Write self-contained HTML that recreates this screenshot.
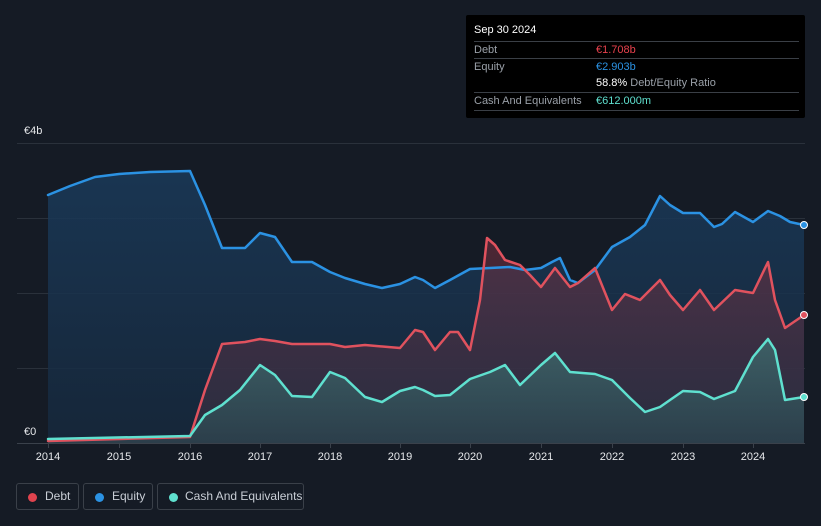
<!DOCTYPE html>
<html><head><meta charset="utf-8"><style>
html,body{margin:0;background:#151b25;width:821px;height:526px;overflow:hidden;font-family:"Liberation Sans",sans-serif;position:relative}
.tt{position:absolute;left:466px;top:15px;width:339px;height:103px;background:#000;border-radius:2px}
.tt .r{position:absolute;left:8px;right:6px;font-size:11px;color:#9aa0a8;border-top:1px solid #3a3f46;height:17px;line-height:16px;white-space:nowrap}
.tt .v{position:absolute;left:122px}
.leg{position:absolute;top:483px;height:27px;border:1px solid #3a4049;border-radius:3px;color:#c9ced6;font-size:12px;line-height:25px;box-sizing:border-box;white-space:nowrap}
.leg i{position:absolute;left:11px;top:9px;width:9px;height:9px;border-radius:50%}
.ax{position:absolute;top:451px;font-size:11px;color:#e6e8eb;width:40px;text-align:center}
</style></head><body>
<svg width="821" height="526" style="position:absolute;left:0;top:0">
<defs>
<linearGradient id="ge" x1="0" y1="0" x2="0" y2="1"><stop offset="0" stop-color="#1a3a5a" stop-opacity=".85"/><stop offset="1" stop-color="#16283c" stop-opacity=".85"/></linearGradient>
<linearGradient id="gd" x1="0" y1="0" x2="0" y2="1"><stop offset="0" stop-color="#7a3040" stop-opacity=".55"/><stop offset="1" stop-color="#3a3346" stop-opacity=".5"/></linearGradient>
<linearGradient id="gc" x1="0" y1="0" x2="0" y2="1"><stop offset="0" stop-color="#3f7f7c" stop-opacity=".6"/><stop offset="1" stop-color="#2e4a52" stop-opacity=".6"/></linearGradient>
</defs>
<g stroke="#2a313b" stroke-width="1">
<line x1="17" y1="143.5" x2="805" y2="143.5"/><line x1="17" y1="218.5" x2="805" y2="218.5"/><line x1="17" y1="293.5" x2="805" y2="293.5"/><line x1="17" y1="368.5" x2="805" y2="368.5"/>
</g>
<polygon fill="url(#ge)" points="48,443 48,195 70,186 95,177 119,174 150,172 190,171 205,205 222,248 245,248 260,233 275,237 292,262 312,262 330,272 345,278 365,284 382,288 400,284 415,277 423,280 435,288 450,280 470,269 490,268 510,267 525,270 541,268 552,262 560,258 570,280 578,283 595,270 612,247 630,237 645,225 660,196 670,205 683,213 700,213 714,227 722,224 735,212 753,222 768,211 780,216 790,222 804,225 804,443"/>
<polygon fill="url(#gd)" points="48,443 48,441 190,437 205,390 222,344 245,342 260,339 275,341 292,344 330,344 345,347 365,345 400,348 415,330 423,332 435,350 450,332 458,332 470,350 480,300 487,238 495,245 505,260 520,265 530,275 541,287 555,268 570,287 578,283 595,268 612,310 625,294 640,300 660,280 670,295 683,310 700,290 714,310 735,290 753,293 768,262 775,300 785,328 804,315 804,443"/>
<polygon fill="url(#gc)" points="48,443 48,439 190,436 205,415 222,405 240,390 260,365 275,375 292,396 312,397 330,372 345,378 365,397 382,402 400,391 415,387 423,390 435,396 450,395 470,379 490,372 505,365 520,385 541,365 555,353 570,372 595,374 612,380 630,398 645,412 660,407 670,400 683,391 700,392 714,399 735,391 753,357 768,339 775,350 785,400 804,397 804,443"/>
<g fill="none" stroke-width="2.5" stroke-linejoin="round" stroke-linecap="round">
<polyline stroke="#2b92e3" points="48,195 70,186 95,177 119,174 150,172 190,171 205,205 222,248 245,248 260,233 275,237 292,262 312,262 330,272 345,278 365,284 382,288 400,284 415,277 423,280 435,288 450,280 470,269 490,268 510,267 525,270 541,268 552,262 560,258 570,280 578,283 595,270 612,247 630,237 645,225 660,196 670,205 683,213 700,213 714,227 722,224 735,212 753,222 768,211 780,216 790,222 804,225"/>
<polyline stroke="#e0525e" points="48,441 190,437 205,390 222,344 245,342 260,339 275,341 292,344 330,344 345,347 365,345 400,348 415,330 423,332 435,350 450,332 458,332 470,350 480,300 487,238 495,245 505,260 520,265 530,275 541,287 555,268 570,287 578,283 595,268 612,310 625,294 640,300 660,280 670,295 683,310 700,290 714,310 735,290 753,293 768,262 775,300 785,328 804,315"/>
<polyline stroke="#5fe0cf" points="48,439 190,436 205,415 222,405 240,390 260,365 275,375 292,396 312,397 330,372 345,378 365,397 382,402 400,391 415,387 423,390 435,396 450,395 470,379 490,372 505,365 520,385 541,365 555,353 570,372 595,374 612,380 630,398 645,412 660,407 670,400 683,391 700,392 714,399 735,391 753,357 768,339 775,350 785,400 804,397"/>
</g>
<line x1="17" y1="443.5" x2="805" y2="443.5" stroke="#3a414b"/>
<g stroke="#3a414b"><line x1="48.5" y1="443" x2="48.5" y2="448"/><line x1="119.5" y1="443" x2="119.5" y2="448"/><line x1="190.5" y1="443" x2="190.5" y2="448"/><line x1="260.5" y1="443" x2="260.5" y2="448"/><line x1="330.5" y1="443" x2="330.5" y2="448"/><line x1="400.5" y1="443" x2="400.5" y2="448"/><line x1="470.5" y1="443" x2="470.5" y2="448"/><line x1="541.5" y1="443" x2="541.5" y2="448"/><line x1="612.5" y1="443" x2="612.5" y2="448"/><line x1="683.5" y1="443" x2="683.5" y2="448"/><line x1="753.5" y1="443" x2="753.5" y2="448"/></g>
<circle cx="804" cy="225" r="3.5" fill="#2b92e3" stroke="#fff" stroke-width="1"/>
<circle cx="804" cy="315" r="3.5" fill="#e0525e" stroke="#fff" stroke-width="1"/>
<circle cx="804" cy="397" r="3.5" fill="#5fe0cf" stroke="#fff" stroke-width="1"/>
</svg>
<div style="position:absolute;left:24px;top:125px;font-size:11px;color:#e6e8eb">€4b</div>
<div style="position:absolute;left:24px;top:426px;font-size:11px;color:#e6e8eb">€0</div>
<div class="ax" style="left:28px">2014</div><div class="ax" style="left:99px">2015</div><div class="ax" style="left:170px">2016</div><div class="ax" style="left:240px">2017</div><div class="ax" style="left:310px">2018</div><div class="ax" style="left:380px">2019</div><div class="ax" style="left:450px">2020</div><div class="ax" style="left:521px">2021</div><div class="ax" style="left:592px">2022</div><div class="ax" style="left:663px">2023</div><div class="ax" style="left:733px">2024</div>
<div class="tt">
<div style="position:absolute;left:8px;top:9px;font-size:11px;color:#fff">Sep 30 2024</div>
<div class="r" style="top:26px">Debt<span class="v" style="color:#e8414d">€1.708b</span></div>
<div class="r" style="top:43px">Equity<span class="v" style="color:#2b92e3">€2.903b</span></div>
<div class="r" style="top:60px;border-top:none"><span class="v" style="color:#fff">58.8% <span style="color:#9aa0a8">Debt/Equity Ratio</span></span></div>
<div class="r" style="top:77px">Cash And Equivalents<span class="v" style="color:#5fe0cf">€612.000m</span></div>
<div style="position:absolute;left:8px;right:6px;top:95px;border-top:1px solid #3a3f46"></div>
</div>
<div class="leg" style="left:16px;width:63px"><i style="background:#e0434e"></i><span style="position:absolute;left:28px">Debt</span></div>
<div class="leg" style="left:83px;width:70px"><i style="background:#2b92e3"></i><span style="position:absolute;left:28px">Equity</span></div>
<div class="leg" style="left:157px;width:147px"><i style="background:#5fe0cf"></i><span style="position:absolute;left:27px">Cash And Equivalents</span></div>
</body></html>
